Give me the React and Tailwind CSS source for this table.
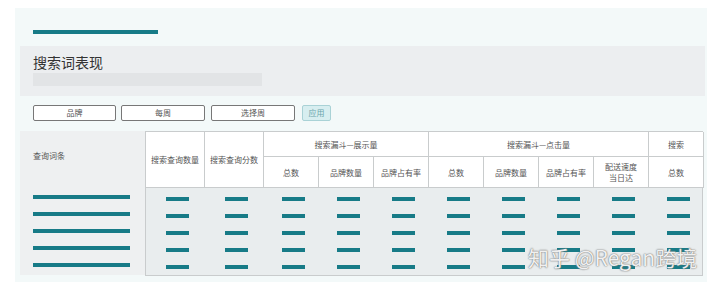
const teal = "bg-[#177b87]";

function Bar({ className }) {
  return <div className={`h-[4px] ${teal} ${className}`} />;
}

const subCols = ["总数", "品牌数量", "品牌占有率", "总数", "品牌数量", "品牌占有率", null, "总数"];

export default function App() {
  const rows = [0, 1, 2, 3, 4];
  const cell = "border-r border-b border-[#c9cccd] bg-white flex items-center justify-center text-center";

  return (
    <div
      className="relative w-[720px] h-[291px] bg-white pt-[8px] pl-[15px] text-[#555]"
      style={{ fontFamily: '"Noto Sans CJK SC", "Noto Sans", sans-serif' }}
    >
      <div className="w-[692px] h-[274px] bg-[#f3f9f9] pt-[22px]">
        <div className={`ml-[18px] w-[125px] h-[4px] ${teal}`} />

        <div className="ml-[5px] mt-[12px] w-[685px] h-[50px] bg-[#eceef0] pl-[13px] pt-[7px]">
          <div className="text-[14px] leading-[18px] text-[#333]">搜索词表现</div>
          <div className="mt-[2px] w-[229px] h-[13px] bg-[#e2e4e6]" />
        </div>

        <div className="ml-[18px] mt-[9px] flex items-center gap-[5px] text-[8px]">
          <div className="w-[83px] h-[16px] border border-[#777] rounded-[2px] bg-white flex items-center justify-center">品牌</div>
          <div className="w-[84px] h-[16px] border border-[#777] rounded-[2px] bg-white flex items-center justify-center">每周</div>
          <div className="ml-[1px] w-[84px] h-[16px] border border-[#777] rounded-[2px] bg-white flex items-center justify-center">选择周</div>
          <div className="ml-[2px] w-[29px] h-[16px] border border-[#a9d2d6] rounded-[2px] bg-[#d7eef0] text-[#6aa5ab] flex items-center justify-center">应用</div>
        </div>

        <div className="ml-[5px] mt-[10px] flex text-[8px] leading-[11px]">
          <div className="w-[125px] h-[144px] bg-[#eef0f1] pl-[13px]">
            <div className="h-[56px] pt-[19px]">查询词条</div>
            <div className="pt-[8px] flex flex-col gap-[13px]">
              {rows.map((r) => (
                <Bar key={r} className="w-[97px]" />
              ))}
            </div>
          </div>

          <div className="w-[558px]">
            <div className="grid grid-cols-[59px_59px_repeat(8,55px)] grid-rows-[25px_31px] border-l border-t border-[#c9cccd]">
              <div className={`${cell} row-span-2`}>搜索查询数量</div>
              <div className={`${cell} row-span-2`}>搜索查询分数</div>
              <div className={`${cell} col-span-3`}>搜索漏斗—展示量</div>
              <div className={`${cell} col-span-4`}>搜索漏斗—点击量</div>
              <div className={cell}>搜索</div>
              {subCols.map((t, i) => (
                <div key={i} className={cell}>
                  {t ?? (
                    <span>
                      配送速度
                      <br />
                      当日达
                    </span>
                  )}
                </div>
              ))}
            </div>
            <div className="h-[88px] border-l border-r border-b border-[#c9cccd] bg-[#e9edee] pt-[9px] grid grid-cols-[59px_59px_repeat(8,55px)] gap-y-[13px] content-start">
              {rows.map((r) =>
                Array.from({ length: 10 }).map((_, c) => (
                  <div key={`${r}-${c}`} className="flex justify-center pl-[3px]">
                    <Bar className="w-[23px]" />
                  </div>
                ))
              )}
            </div>
          </div>
        </div>
      </div>

      <div
        className="absolute left-[528px] top-[244px] text-[21px] leading-[26px] text-white/90"
        style={{ textShadow: "0 0 1px #666, 0 0 2px #888" }}
      >
        知乎 @Regan跨境
      </div>
    </div>
  );
}
